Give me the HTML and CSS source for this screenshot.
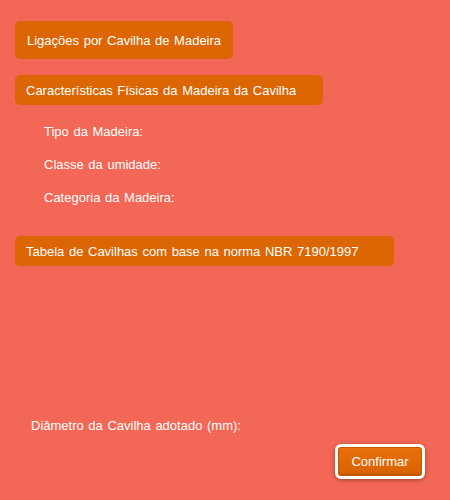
FILE: index.html
```html
<!DOCTYPE html>
<html>
<head>
<meta charset="utf-8">
<link rel="stylesheet" href="styles.css">
</head>
<body>
<div class="page">
  <div class="title box">Ligações por Cavilha de Madeira</div>
  <div class="section box">Características Físicas da Madeira da Cavilha</div>
  <div class="fields">
    <div class="field">Tipo da Madeira:</div>
    <div class="field">Classe da umidade:</div>
    <div class="field">Categoria da Madeira:</div>
  </div>
  <div class="table box">Tabela de Cavilhas com base na norma NBR 7190/1997</div>
  <div class="diameter">Diâmetro da Cavilha adotado (mm):</div>
  <div class="actions">
    <button class="confirm">Confirmar</button>
  </div>
</div>
</body>
</html>
```
FILE: styles.css
```css
html, body {
  margin: 0;
  padding: 0;
  background: #f26755;
}
body {
  width: 450px;
  height: 500px;
  overflow: hidden;
  font-family: "Liberation Sans", Arial, sans-serif;
  font-size: 13px;
  color: #ffffff;
  word-spacing: 1px;
}
.page {
  display: flex;
  flex-direction: column;
  align-items: flex-start;
  padding: 21px 0 0 15px;
}
.box {
  background: #dd6604;
  border-radius: 5px;
  box-sizing: border-box;
}
.title {
  width: 218px;
  height: 38px;
  padding-left: 12px;
  display: flex;
  align-items: center;
}
.section {
  margin-top: 16px;
  width: 308px;
  height: 30px;
  padding-left: 11px;
  display: flex;
  align-items: center;
}
.fields {
  display: flex;
  flex-direction: column;
  gap: 17px;
  padding-left: 29px;
  margin-top: 19px;
}
.field {
  line-height: 16px;
}
.table {
  margin-top: 30px;
  width: 379px;
  height: 30px;
  padding-left: 11px;
  display: flex;
  align-items: center;
}
.diameter {
  margin-top: 152px;
  padding-left: 16px;
  line-height: 16px;
}
.actions {
  align-self: stretch;
  display: flex;
  justify-content: flex-end;
  padding-right: 25px;
  margin-top: 10px;
}
.confirm {
  width: 90px;
  height: 35px;
  border: 3px solid #ffffff;
  border-radius: 6px;
  background: linear-gradient(#e9700c, #d86200);
  color: #ffffff;
  font-family: "Liberation Sans", Arial, sans-serif;
  font-size: 13px;
  padding: 0;
  box-shadow: 0 1px 4px rgba(0,0,0,0.35), inset 0 0 0 1px #c95a00, inset 0 -2px 2px rgba(0,0,0,0.15);
}
```
